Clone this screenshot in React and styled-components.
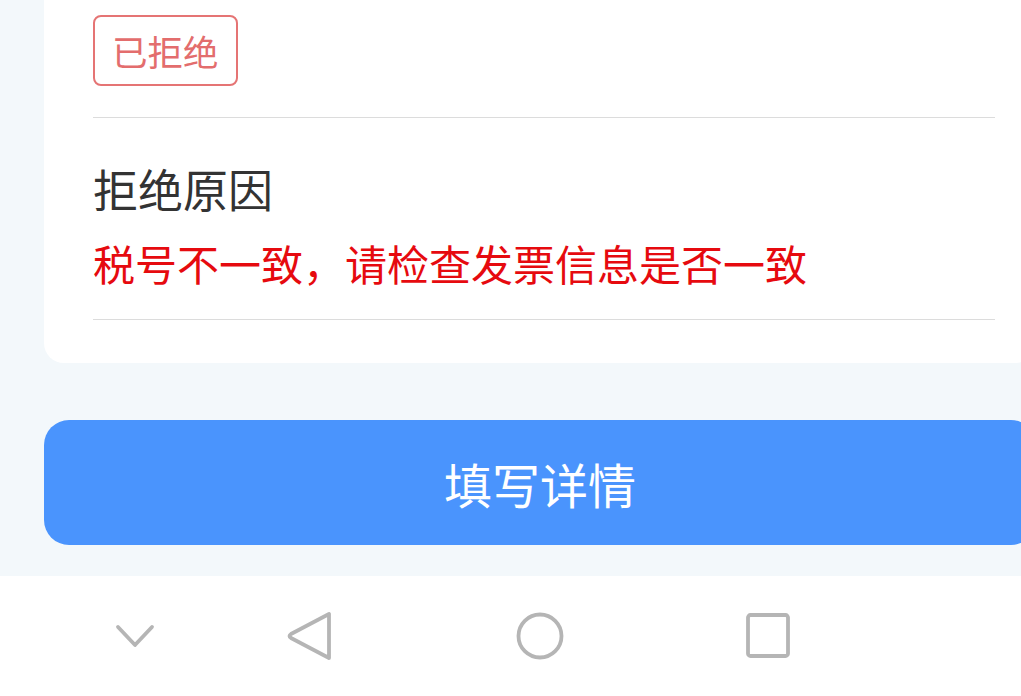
import React from 'react'
import styled, { createGlobalStyle } from 'styled-components'

const GlobalStyle = createGlobalStyle`
  html, body {
    margin: 0;
    padding: 0;
    overflow: hidden;
    background: #f3f8fb;
  }
  body {
    font-family: "Noto Sans CJK SC", "Noto Sans", sans-serif;
  }
`

const Viewport = styled.div`
  width: 1021px;
  height: 696px;
  overflow: hidden;
`

const Screen = styled.div`
  width: 1080px;
  height: 696px;
  display: flex;
  flex-direction: column;
  background: #f3f8fb;
`

const Content = styled.div`
  flex: 1;
  display: flex;
  flex-direction: column;
  padding: 0 44px;
`

const Card = styled.div`
  background: #fff;
  border-radius: 0 0 20px 20px;
  padding: 15px 41px 0 49px;
`

const StatusTag = styled.div`
  display: inline-flex;
  align-items: center;
  justify-content: center;
  box-sizing: border-box;
  height: 71px;
  padding: 0 17px;
  border: 2px solid #e57474;
  border-radius: 8px;
  color: #e36d6d;
  font-size: 35.5px;
  line-height: 1;
`

const TagRow = styled.div`
  padding-bottom: 31px;
  border-bottom: 1.5px solid #dcdcdc;
`

const Section = styled.div`
  padding: 42px 0 28px;
  border-bottom: 1.5px solid #dcdcdc;
`

const Label = styled.div`
  color: #333;
  font-size: 45px;
  line-height: 58px;
`

const Reason = styled.div`
  margin-top: 17px;
  color: #e60a0f;
  font-size: 42px;
  line-height: 56px;
`

const CardFoot = styled.div`
  height: 43px;
`

const PrimaryButton = styled.button`
  margin-top: 57px;
  height: 125px;
  border: none;
  border-radius: 25px;
  background: #4a94fd;
  color: #fff;
  font-family: inherit;
  font-size: 48px;
  padding: 0;
`

const NavBar = styled.div`
  height: 120px;
  background: #fff;
  display: flex;
  align-items: center;
`

const NavSlot = styled.div`
  width: 50px;
  height: 50px;
  margin-left: ${p => p.offset}px;
  display: flex;
  align-items: center;
  justify-content: center;
`

const navStroke = { fill: 'none', stroke: '#b5b5b5', strokeWidth: 3.8, strokeLinecap: 'round', strokeLinejoin: 'round' }

const App = () => (
  <Viewport>
    <GlobalStyle />
    <Screen>
      <Content>
        <Card>
          <TagRow>
            <StatusTag>已拒绝</StatusTag>
          </TagRow>
          <Section>
            <Label>拒绝原因</Label>
            <Reason>税号不一致，请检查发票信息是否一致</Reason>
          </Section>
          <CardFoot />
        </Card>
        <PrimaryButton>填写详情</PrimaryButton>
      </Content>
      <NavBar>
        <NavSlot offset={110}>
          <svg width="50" height="50" viewBox="0 0 50 50">
            <polyline points="8,16 25,34 42,16" {...navStroke} />
          </svg>
        </NavSlot>
        <NavSlot offset={124}>
          <svg width="50" height="50" viewBox="0 0 50 50">
            <path d="M45 3 L45 47 L7 27 Q4 25 7 23 Z" {...navStroke} />
          </svg>
        </NavSlot>
        <NavSlot offset={181}>
          <svg width="50" height="50" viewBox="0 0 50 50">
            <circle cx="25" cy="25" r="21.5" {...navStroke} />
          </svg>
        </NavSlot>
        <NavSlot offset={178}>
          <svg width="50" height="50" viewBox="0 0 50 50">
            <rect x="5" y="4" width="40" height="41" rx="2.5" {...navStroke} />
          </svg>
        </NavSlot>
      </NavBar>
    </Screen>
  </Viewport>
)

export default App
